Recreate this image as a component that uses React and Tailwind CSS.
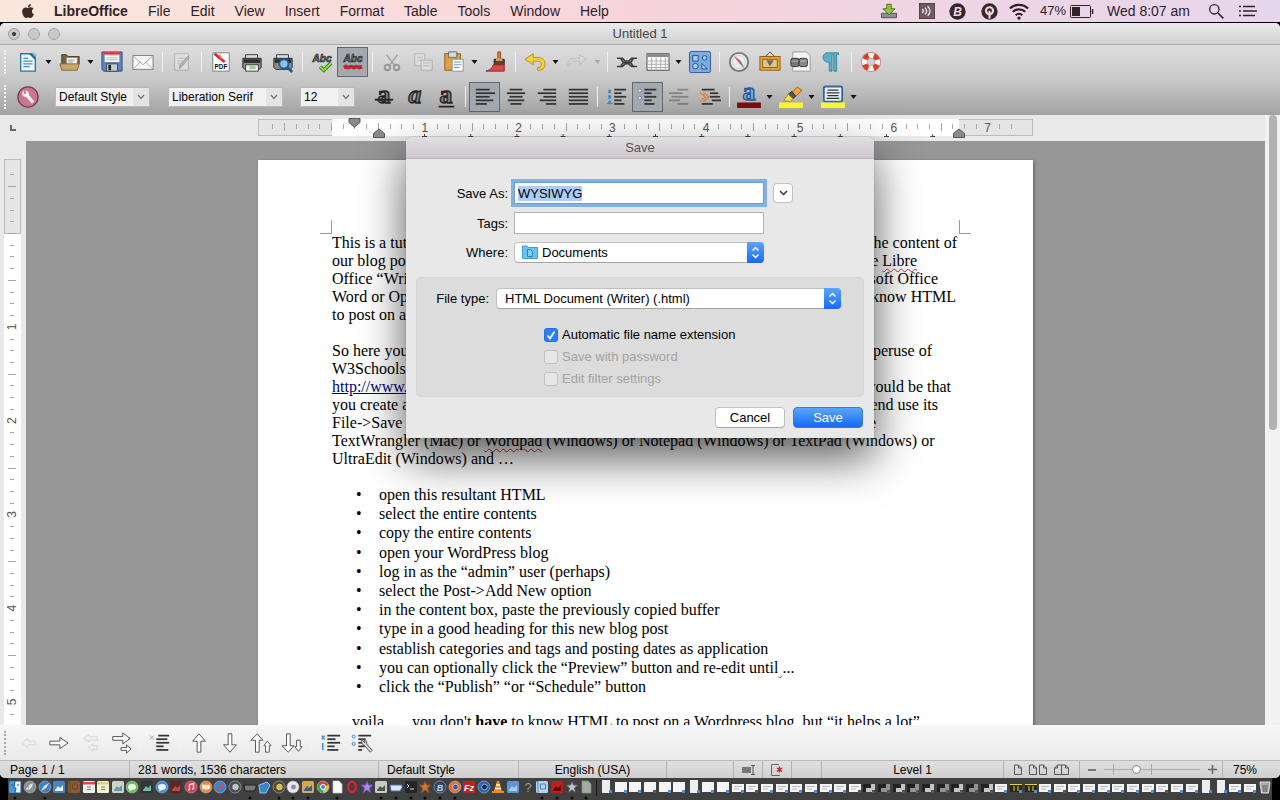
import { useEffect, useRef, useState } from "react";
import { FaApple } from "react-icons/fa";

const INCH = 93.8;
const MENUS = ["File", "Edit", "View", "Insert", "Format", "Table", "Tools", "Window", "Help"];

// each line is split where the save sheet covers it; end is the line's measured width
const LINES = [
  { left: "This is a tutorial", right: "the content of", end: 625 },
  { left: "our blog post", right: <>the <Misspelt>Libre</Misspelt></>, end: 585 },
  { left: "Office “Writer”", right: "Microsoft Office", end: 606 },
  { left: "Word or Open", right: "know HTML", end: 624 },
  { left: "to post on a" },
  {},
  { left: "So here you", right: "peruse of", end: 600 },
  { left: "W3Schools" },
  { link: "http://www.w3", right: "would be that", end: 619 },
  { left: "you create a", right: "end use its", end: 606 },
  { left: "File->Save As", right: "the", end: 544 },
];

const STEPS = [
  "open this resultant HTML",
  "select the entire contents",
  "copy the entire contents",
  "open your WordPress blog",
  "log in as the “admin” user (perhaps)",
  "select the Post->Add New option",
  "in the content box, paste the previously copied buffer",
  "type in a good heading for this new blog post",
  "establish categories and tags and posting dates as application",
  "preview",
  "click the “Publish” “or “Schedule” button",
];

function Misspelt({ children }) {
  return (
    <span className="underline decoration-[#c0304a] decoration-wavy decoration-1 underline-offset-2">
      {children}
    </span>
  );
}

function Icon({ children, size = 22, className = "" }) {
  return (
    <svg width={size} height={size} viewBox="0 0 24 24" fill="none" className={`shrink-0 overflow-visible ${className}`} aria-hidden="true">
      {children}
    </svg>
  );
}

function Tool({ label, active, faded, children }) {
  return (
    <button
      type="button"
      aria-label={label}
      className={`flex h-[30px] w-[31px] shrink-0 items-center justify-center ${
        active ? "border border-[#60676f] bg-[#a4a9b0]" : ""
      } ${faded ? "opacity-40" : ""}`}
    >
      <Icon>{children}</Icon>
    </button>
  );
}

function Caret({ faded }) {
  return (
    <span className={`flex w-[11px] shrink-0 justify-center ${faded ? "opacity-20" : ""}`}>
      <svg width="7" height="4" viewBox="0 0 7 4" aria-hidden="true">
        <path d="M0.500 0h6L3.500 4z" fill="#111" />
      </svg>
    </span>
  );
}

function Sep() {
  return (
    <span className="flex w-2 shrink-0 justify-center">
      <span className="h-5 w-px bg-[#f0f0f0]" />
    </span>
  );
}

function Grip({ dark }) {
  return <span className={`mr-[5px] ml-1 h-6 w-[3px] shrink-0 border-l-2 border-dotted ${dark ? "border-[#aaa]" : "border-[#f4f4f4]"}`} />;
}

function Combo({ label, value, className }) {
  return (
    <span className={`relative h-5 shrink-0 ${className}`}>
      <select
        aria-label={label}
        className="block h-full w-full appearance-none border border-[#b9b9b9] bg-[#f1f1f1] pl-[3px] text-[12px] leading-[18px] text-black outline-none"
      >
        <option>{value}</option>
      </select>
      <span className="pointer-events-none absolute inset-y-px right-px flex w-4 items-center justify-center bg-[#e4e4e4]">
        <svg width="8" height="6" viewBox="0 0 8 6" fill="none" aria-hidden="true">
          <path d="M1 1l3 3.500L7 1" stroke="#777" strokeWidth="1.300" />
        </svg>
      </span>
    </span>
  );
}

function Bars({ x = [2, 2, 2, 2, 2], w = [15, 21, 15, 19, 12], color = "#333" }) {
  return x.map((start, i) => (
    <rect key={i} x={start} y={3 + i * 3.900} width={w[i]} height="1.900" fill={color} />
  ));
}

function Printer() {
  return (
    <>
      <path d="M5 9V4h13v5" fill="#dcdcdc" stroke="#333" />
      <path d="M2 8h20v10l-2 2H4l-2-2z" fill="#8c8c8c" stroke="#222" />
      <rect x="3" y="9" width="18" height="4" fill="#2d2d2d" />
    </>
  );
}

function StandardBar() {
  return (
    <div className="flex h-[35px] items-center pb-px">
      <Grip />
      <Tool label="New">
        <path d="M4 3h13l3 3v16H4z" fill="#eef7fc" stroke="#277aa6" strokeWidth="1.500" />
        <path d="M7 8h5M7 11h10M7 14h10M7 17h7" stroke="#3a94c0" strokeWidth="1.500" />
        <path d="M13 3h7v7z" fill="#1d6c98" />
        <path d="M17 2l4 4" stroke="#7cc2e2" strokeWidth="2" />
      </Tool>
      <Caret />
      <Tool label="Open">
        <path d="M3 14V4h5l2 2h12v8z" fill="#77603c" stroke="#4c3c22" />
        <rect x="8" y="7" width="12" height="10" fill="#f2f2f2" stroke="#888" />
        <path d="M10 10h7M10 12h5" stroke="#999" />
        <path d="M1 14h21l-2 7H3z" fill="#c6a66a" stroke="#80663a" />
      </Tool>
      <Caret />
      <Tool label="Save">
        <path d="M1 1h22v21H3l-2-2z" fill="#5a86bd" stroke="#234d86" />
        <rect x="4" y="1" width="16" height="11" fill="#fafafa" />
        <rect x="3" y="1" width="18" height="3" fill="#e33a3a" />
        <path d="M6 7.500h12M6 9.500h12" stroke="#b5b5b5" />
        <rect x="6" y="14" width="12" height="8" fill="#c5ccd4" stroke="#33495f" />
        <rect x="8" y="15" width="3" height="6" fill="#222" />
      </Tool>
      <Tool label="Email">
        <rect x="1" y="5" width="22" height="15" fill="#f8f8f8" stroke="#777" />
        <path d="M1.500 5.500L12 15l10.500-9.500M2 19l7-7M22 19l-7-7" stroke="#a5a5a5" />
      </Tool>
      <Sep />
      <Tool label="Edit mode" faded>
        <path d="M4 3h15v18H4z" fill="#eee" stroke="#777" />
        <path d="M7 8h9M7 11h7M7 14h5" stroke="#888" />
        <path d="M20 7L11 18l-2 1 .5-3L18 6z" fill="#888" stroke="#555" />
      </Tool>
      <Sep />
      <Tool label="Export as PDF">
        <path d="M3 2h18v20H3z" fill="#fff" stroke="#777" />
        <path d="M5 3l11 9" stroke="#d3262d" strokeWidth="3" />
        <path d="M10 4l3 4" stroke="#f08a8a" strokeWidth="2" />
        <text x="12" y="20" textAnchor="middle" fontSize="7" fontWeight="700" fill="#111">PDF</text>
      </Tool>
      <Tool label="Print">
        <Printer />
        <path d="M5 15h14v7H5z" fill="#f6f6f6" stroke="#333" />
        <rect x="9" y="16" width="7" height="4" fill="#9ed08c" />
      </Tool>
      <Tool label="Print preview">
        <Printer />
        <circle cx="13" cy="14" r="5" fill="#8fc2ea" stroke="#1c5c98" strokeWidth="2" />
        <path d="M17 18l5 5" stroke="#1c5c98" strokeWidth="3" />
      </Tool>
      <Sep />
      <Tool label="Spelling">
        <text x="12" y="12" textAnchor="middle" fontSize="11" fontWeight="700" fontStyle="italic" fill="#777" stroke="#222" strokeWidth="0.700">Abc</text>
        <path d="M10 17l4 4 8-8" stroke="#387c14" strokeWidth="4" />
        <path d="M10 17l4 4 8-8" stroke="#90dc4a" strokeWidth="2" />
      </Tool>
      <Tool label="Automatic spell checking" active>
        <text x="12" y="12" textAnchor="middle" fontSize="11" fontWeight="700" fontStyle="italic" fill="#777" stroke="#222" strokeWidth="0.700">Abc</text>
        <path d="M2 18l2-1 3 1 3-1 3 1 3-1 3 1 3-1" stroke="#c42036" strokeWidth="4" />
      </Tool>
      <Sep />
      <Tool label="Cut" faded>
        <path d="M6 4l9 12M18 4L9 16" stroke="#555" strokeWidth="1.500" />
        <circle cx="7" cy="18" r="3" stroke="#444" strokeWidth="2" />
        <circle cx="17" cy="18" r="3" stroke="#444" strokeWidth="2" />
      </Tool>
      <Tool label="Copy" faded>
        <path d="M3 3h11v13H3z" fill="#eee" stroke="#777" />
        <path d="M5 7h7M5 10h7" stroke="#888" />
        <path d="M10 10h12v11H10z" fill="#eee" stroke="#777" />
        <path d="M12 13h8M12 16h8" stroke="#888" />
      </Tool>
      <Tool label="Paste">
        <rect x="2" y="3" width="17" height="18" fill="#dfa04c" stroke="#8c5c1e" />
        <path d="M6 1h9v6H6z" fill="#d8d8d8" stroke="#666" />
        <path d="M10 9h12v13H10z" fill="#fff" stroke="#8a8a8a" />
        <path d="M12 12h8M12 15h8M12 18h6" stroke="#6a8db0" />
      </Tool>
      <Caret />
      <Tool label="Clone formatting">
        <path d="M14 1h3v9h-3z" fill="#d88332" stroke="#844812" />
        <path d="M10 9h11v6H10z" fill="#55423a" stroke="#2c211d" />
        <path d="M12 8h7v3h-7z" fill="#e0994c" />
        <path d="M9 15h12v7L1 22c4-1 7-3 8-7z" fill="#d44a4a" stroke="#92262a" />
      </Tool>
      <Sep />
      <Tool label="Undo">
        <path d="M1 9l9-6v4h5c5 0 8 3 8 7 0 5-3 7-8 7v-3c3 0 4-2 4-4s-2-3-4-3h-5v4z" fill="#f4cf45" stroke="#b48b17" />
      </Tool>
      <Caret />
      <Tool label="Redo" faded>
        <path d="M22 9l-7-5v4H9c-5 0-7 3-7 8h2c0-4 2-5 5-5h6v4z" fill="#ddd" stroke="#999" />
      </Tool>
      <Caret faded />
      <Sep />
      <Tool label="Hyperlink">
        <path d="M1 8h6l3 3h4l3-3h6M1 17h6l3-3h4l3 3h6M5 8l3 4.500L5 17M19 8l-3 4.500 3 4.500" stroke="#3d3d3d" strokeWidth="1.700" />
        <path d="M8 12.500h8" stroke="#3d3d3d" strokeWidth="2" />
      </Tool>
      <Tool label="Table">
        <rect x="0" y="3" width="24" height="18" fill="#fafafa" stroke="#444" />
        <rect x="0.500" y="3.500" width="23" height="3" fill="#8a8a8a" />
        <path d="M0 11h24M0 14.500h24M0 18h24M5 7v14M10 7v14M15 7v14M20 7v14" stroke="#aaa" />
      </Tool>
      <Caret />
      <Tool label="Draw functions">
        <rect x="0.500" y="0.500" width="23" height="23" rx="2" fill="#7fabe0" stroke="#28558f" />
        <path d="M4 5h6v6H4zM14 13.500v6h6z" stroke="#174a86" fill="#acd0f5" />
        <circle cx="17" cy="7.500" r="2.500" stroke="#174a86" fill="#acd0f5" />
        <circle cx="7" cy="16.500" r="3" stroke="#174a86" fill="#acd0f5" />
      </Tool>
      <Sep />
      <Tool label="Navigator">
        <circle cx="12" cy="12" r="10" fill="#eee" stroke="#777" strokeWidth="2" />
        <circle cx="12" cy="12" r="7" stroke="#ccc" />
        <path d="M6 5l8 6-2 2z" fill="#d04862" />
        <path d="M18 19l-6-6 2-2z" fill="#777" />
      </Tool>
      <Tool label="Gallery">
        <path d="M7 6l5-5 5 5" stroke="#5c451c" />
        <rect x="1" y="6" width="22" height="15" fill="#e8a63c" stroke="#8e5a10" />
        <rect x="4" y="9" width="16" height="9" fill="#d8c88e" stroke="#8e5a10" />
        <path d="M8 10h8l-4 7z" fill="#6e6a4c" />
      </Tool>
      <Tool label="Data sources">
        <path d="M3 1h15l4 4v17H3z" fill="#f4f4f4" stroke="#999" />
        <rect x="1" y="8" width="9" height="9" rx="2" fill="#777" stroke="#333" />
        <rect x="10" y="8" width="9" height="9" rx="2" fill="#888" stroke="#333" />
        <path d="M2 11h7M11 11h7" stroke="#bbb" />
      </Tool>
      <Tool label="Nonprinting characters">
        <path d="M6 2h13v2h-2v18h-3V4h-2v18H9v-10a5 5 0 0 1-3-10z" fill="#5fb0c6" stroke="#33839c" />
      </Tool>
      <Sep />
      <Tool label="Help">
        <circle cx="12" cy="12" r="7.500" stroke="#f6f3ee" strokeWidth="6" />
        <circle cx="12" cy="12" r="7.500" stroke="#d8402c" strokeWidth="6" strokeDasharray="5.900 5.880" strokeDashoffset="-3" />
        <circle cx="12" cy="12" r="4" fill="#ccd0e4" stroke="#a88" strokeWidth="0.500" />
        <circle cx="12" cy="12" r="10.500" stroke="#b06452" strokeWidth="0.700" />
      </Tool>
    </div>
  );
}

function Glyph({ slant, fill = "#808080", stroke = "#262626", y = 19, children }) {
  return (
    <>
      <text
        x="12"
        y={y}
        textAnchor="middle"
        fontSize="28"
        fontWeight="700"
        fontFamily="Liberation Serif, serif"
        fontStyle={slant ? "italic" : "normal"}
        fill={fill}
        stroke={stroke}
        strokeWidth="1.500"
      >
        a
      </text>
      {children}
    </>
  );
}

function FormattingBar() {
  return (
    <div className="flex h-[35px] items-center pb-px">
      <Grip />
      <Tool label="Styles">
        <circle cx="12" cy="12" r="11" fill="#c9798f" stroke="#7d3850" strokeWidth="1.500" />
        <path d="M7 5a4 4 0 0 0 3 7l6 7 3-2-6-7a4 4 0 0 0-4-5l1 3-2 1z" fill="#f6f0f2" />
      </Tool>
      <Combo label="Paragraph style" value="Default Style" className="ml-3 w-[95px]" />
      <Combo label="Font name" value="Liberation Serif" className="ml-[18px] w-[115px]" />
      <Combo label="Font size" value="12" className="mr-[13px] ml-[17px] w-[55px]" />
      <Tool label="Bold"><Glyph><path d="M2 15h20" stroke="#262626" strokeWidth="2" /></Glyph></Tool>
      <Tool label="Italic"><Glyph slant /></Tool>
      <Tool label="Underline"><Glyph><path d="M4 22.500h17" stroke="#262626" strokeWidth="1.700" /></Glyph></Tool>
      <Sep />
      <Tool label="Align left" active><Bars /></Tool>
      <Tool label="Center"><Bars x={[5, 2, 5, 3, 6]} w={[14, 20, 14, 18, 12]} /></Tool>
      <Tool label="Align right"><Bars x={[8, 2, 8, 4, 11]} w={[14, 20, 14, 18, 11]} /></Tool>
      <Tool label="Justify"><Bars w={[21, 21, 21, 21, 21]} /></Tool>
      <Sep />
      <Tool label="Numbering">
        <path d="M4 4v16" stroke="#3f86ca" strokeWidth="3" strokeDasharray="4 2" />
        <path d="M1 19h6" stroke="#3f86ca" />
        <Bars x={[9, 9, 9, 9, 9]} w={[13, 8, 13, 8, 11]} />
      </Tool>
      <Tool label="Bullets" active>
        <circle cx="3" cy="5" r="1.800" fill="#fff" stroke="#4b7db5" />
        <circle cx="3" cy="13" r="1.800" fill="#fff" stroke="#4b7db5" />
        <Bars x={[8, 8, 8, 8, 8]} w={[13, 8, 13, 8, 11]} />
      </Tool>
      <Tool label="Decrease indent" faded><Bars x={[10, 1, 4, 1, 10]} w={[12, 15, 18, 12, 12]} /></Tool>
      <Tool label="Increase indent">
        <Bars x={[3, 12, 12, 14, 3]} w={[14, 9, 11, 10, 12]} />
        <path d="M1 7l6 5-6 5M5 7l6 5-6 5" stroke="#dd7d35" strokeWidth="1.500" />
      </Tool>
      <Sep />
      <Tool label="Font color">
        <Glyph y={15} fill="#79abe0" stroke="#275a99" />
        <rect y="18" width="26" x="-1" height="6" fill="#7b0f10" />
      </Tool>
      <Caret />
      <Tool label="Highlighting">
        <path d="M13 7l6-6 5 4-8 7z" fill="#f0a63a" stroke="#96600e" />
        <path d="M9 9l4-3 4 5-3 3z" fill="#555" stroke="#222" />
        <path d="M4 16l5-7 5 5-3 3z" fill="#f5df52" stroke="#a48a1c" />
        <rect y="18" width="26" x="-1" height="6" fill="#f9f633" />
      </Tool>
      <Caret />
      <Tool label="Background color">
        <rect x="2" y="0.500" width="20" height="16.500" rx="2" fill="#eaf2fb" stroke="#3467a4" strokeWidth="2" />
        <path d="M6 4.500h12M5 7.500h14M6 10.500h12M5 13.500h14" stroke="#333" strokeWidth="1.500" />
        <rect y="18" width="26" x="-1" height="6" fill="#f9f633" />
      </Tool>
      <Caret />
    </div>
  );
}

function BulletsBar() {
  const arrow = { fill: "#fff", stroke: "#4a4a4a", strokeWidth: 1 };
  return (
    <div className="flex h-[35px] shrink-0 items-center bg-linear-to-b from-[#f7f7f7] to-[#e9e9e9]">
      <Grip dark />
      <Tool label="Promote" faded><path d="M20 10h-8V7l-7 5 7 5v-3h8z" fill="#eee" stroke="#bbb" /></Tool>
      <Tool label="Demote"><path d="M2 10h11V6l9 6-9 6v-4H2z" {...arrow} /></Tool>
      <Tool label="Promote with subpoints" faded><path d="M20 5h-9V3L5 7l6 4V9h9zM20 15h-5v-2l-5 4 5 4v-2h5z" fill="#eee" stroke="#aaa" /></Tool>
      <Tool label="Demote with subpoints">
        <path d="M3 5h11V1l8 6-8 6V9H3zM12 17h6v-3l5 4.500-5 4.500v-3h-6z" {...arrow} />
      </Tool>
      <Sep />
      <Tool label="Insert unnumbered entry">
        <path d="M1 4l4 4M5 4L1 8" stroke="#999" />
        <Bars x={[10, 8, 8, 8, 8]} w={[12, 12, 14, 8, 13]} />
      </Tool>
      <Sep />
      <Tool label="Move up"><path d="M10 22V10H5l7-8 7 8h-5v12z" {...arrow} /></Tool>
      <Tool label="Move down"><path d="M10 2v12H5l7 8 7-8h-5V2z" {...arrow} /></Tool>
      <Tool label="Move up with subpoints"><path d="M6 22V9H1l7-7 6 7h-4v13zM17 22v-7h-2l4-5 4 5h-2v7z" {...arrow} /></Tool>
      <Tool label="Move down with subpoints"><path d="M6 2v13H1l7 7 6-7h-4V2zM17 9v7h-2l4 5 4-5h-2V9z" {...arrow} /></Tool>
      <Sep />
      <Tool label="Restart numbering">
        <path d="M2 4l3 4M5 4L2 8M3 12v8" stroke="#3f86ca" strokeWidth="1.500" />
        <Bars x={[8, 8, 8, 8, 8]} w={[14, 9, 14, 8, 12]} />
      </Tool>
      <Tool label="Bullets and numbering">
        <circle cx="3" cy="5" r="1.700" stroke="#3f86ca" />
        <circle cx="3" cy="13" r="1.700" stroke="#3f86ca" />
        <Bars x={[8, 8, 8, 8, 8]} w={[14, 8, 5, 7, 4]} />
        <path d="M12 8a5 5 0 0 0 3 7l6 7 2-2-6-7a4 4 0 0 0-2-5v4z" fill="#ddd" stroke="#444" />
      </Tool>
    </div>
  );
}

function MenuBar() {
  return (
    <header className="flex h-[23px] shrink-0 items-center border-b border-black bg-linear-to-r from-[#fbe7dc] via-[#f7d4dc] to-[#e6d6ec] pr-[23px] pl-5 text-[14px] text-[#2f2227]">
      <FaApple className="h-4 w-4 text-[#3a2a25]" aria-hidden="true" />
      <nav className="ml-[18px] flex items-center gap-[20px]">
        <button type="button" className="font-bold">LibreOffice</button>
        {MENUS.map((menu) => (
          <button key={menu} type="button">{menu}</button>
        ))}
      </nav>
      <div className="ml-auto flex items-center">
        <Icon size={18}>
          <path d="M2 15h20v6H2z" fill="#8a8f98" stroke="#33383f" />
          <path d="M9 3h6v6h5l-8 8-8-8h5z" fill="#8fc83a" stroke="#33520d" />
        </Icon>
        <Icon size={16} className="ml-[21px]">
          <rect x="0.500" y="0.500" width="23" height="23" fill="#6e5b62" stroke="#33262b" />
          <path d="M5 9q3 3 0 6M9 7q5 5 0 10M13 5q7 7 0 14" stroke="#f3dfe6" strokeWidth="2" />
        </Icon>
        <Icon size={17} className="ml-[14px]">
          <circle cx="12" cy="12" r="11.500" fill="#35282d" />
          <text x="12" y="18" textAnchor="middle" fontSize="17" fontWeight="700" fontStyle="italic" fill="#f3d6e0">B</text>
        </Icon>
        <Icon size={17} className="ml-[15px]">
          <circle cx="12" cy="12" r="11.500" fill="#35282d" />
          <circle cx="12" cy="11" r="5" stroke="#f3d6e0" strokeWidth="3" />
          <path d="M12 11v11" stroke="#f3d6e0" strokeWidth="3" />
        </Icon>
        <Icon size={20} className="ml-[11px]">
          <path d="M1 9a16 16 0 0 1 22 0M4.500 13a11 11 0 0 1 15 0M8 17a6 6 0 0 1 8 0" stroke="#2f2227" strokeWidth="2.500" />
          <circle cx="12" cy="20.500" r="2" fill="#2f2227" />
        </Icon>
        <span className="ml-[11px] text-[13px]">47%</span>
        <svg width="24" height="13" viewBox="0 0 24 13" fill="none" className="ml-1" aria-hidden="true">
          <rect x="0.500" y="0.500" width="20" height="12" rx="1" stroke="#2f2227" />
          <rect x="2" y="2" width="8" height="9" fill="#2f2227" />
          <path d="M22.500 4v5" stroke="#2f2227" strokeWidth="1.500" />
        </svg>
        <time className="ml-[13px]">Wed 8:07 am</time>
        <Icon size={16} className="ml-[18px]">
          <circle cx="9.500" cy="9.500" r="7" stroke="#2f2227" strokeWidth="2" />
          <path d="M15 15l8 8" stroke="#2f2227" strokeWidth="2.500" />
        </Icon>
        <svg width="18" height="12" viewBox="0 0 18 12" className="ml-[15px]" fill="none" aria-hidden="true">
          <path d="M0 1.500h2M0 6h2M0 10.500h2M4 1.500h12M4 6h14M4 10.500h12" stroke="#2f2227" strokeWidth="1.700" />
        </svg>
      </div>
    </header>
  );
}

function HorizontalRuler() {
  const ticks = [];
  for (let i = -5; i <= 58; i += 1) {
    if (i > 0 && i % 8 === 0) continue;
    ticks.push({ x: 73 + (i * INCH) / 8, half: i % 4 === 0 });
  }
  return (
    <svg width="775" height="26" viewBox="0 0 775 26" className="mx-auto" aria-hidden="true">
      <rect x="0.500" y="4.500" width="774" height="16" fill="#e5e5e5" stroke="#bcbcbc" />
      <rect x="74" y="4" width="627" height="17" fill="#fff" />
      {ticks.map(({ x, half }) => (
        <rect key={x} x={Math.round(x)} y={half ? 8 : 9} width="1" height={half ? 8 : 5} fill="#a8a8a8" />
      ))}
      {[1, 2, 3, 4, 5, 6, 7].map((n) => (
        <text key={n} x={73 + n * INCH} y="16.500" textAnchor="middle" fontSize="12" fill="#555">{n}</text>
      ))}
      {Array.from({ length: 12 }, (_, i) => (
        <path key={i} d={`M${164 + i * 46.200} 21.500h5m-2.500 0v-2.500`} stroke="#444" fill="none" />
      ))}
      <path d="M91 3.500h11v4l-5.500 4.500L91 7.500z" fill="#8b8b8b" stroke="#555" />
      <path d="M115.500 22.500h11v-4L121 14l-5.500 4.500z" fill="#8b8b8b" stroke="#555" />
      <path d="M695.500 22.500h11v-4L701 14l-5.500 4.500z" fill="#8b8b8b" stroke="#555" />
    </svg>
  );
}

function VerticalRuler() {
  const ticks = [];
  for (let i = -5; i <= 60; i += 1) {
    if (i > 0 && i % 8 === 0) continue;
    ticks.push({ y: 92 + (i * INCH) / 8, half: i % 4 === 0 });
  }
  return (
    <svg width="26" className="h-full shrink-0 bg-[#e9e9e9]" aria-hidden="true">
      <rect x="4" y="19" width="17" height="2000" fill="#fff" />
      <rect x="4.500" y="18.500" width="16" height="74" fill="#e5e5e5" stroke="#bcbcbc" />
      {ticks.map(({ y, half }) => (
        <rect key={y} x={half ? 8 : 10} y={Math.round(y)} width={half ? 8 : 4} height="1" fill="#a5a5a5" />
      ))}
      {[1, 2, 3, 4, 5].map((n) => (
        <text key={n} transform={`translate(16 ${92 + n * INCH}) rotate(-90)`} textAnchor="middle" fontSize="12" fill="#555">{n}</text>
      ))}
    </svg>
  );
}

function Page() {
  return (
    <article className="relative mx-auto mt-[19px] h-[1000px] w-[775px] bg-white pt-[74px] pr-[60px] pl-[74px] font-['Liberation_Serif',serif] text-[16px] leading-[18px] text-black shadow-[1px_1px_3px_rgba(0,0,0,0.4)]">
      <span className="absolute top-[60px] left-[62px] h-[14px] w-3 border-r border-b border-[#999]" />
      <span className="absolute top-[60px] left-[701px] h-[14px] w-3 border-b border-l border-[#999]" />
      {LINES.map(({ left, link, right, end }, i) => (
        <p key={i} className="flex h-[18px] justify-between whitespace-nowrap" style={{ width: end }}>
          {link ? <a href="#w3" className="text-[#00007a] underline">{link}</a> : <span>{left}</span>}
          <span>{right}</span>
        </p>
      ))}
      <p className="whitespace-nowrap">
        TextWrangler (Mac) or <Misspelt>Wordpad</Misspelt> (Windows) or Notepad (Windows) or TextPad (Windows) or
      </p>
      <p>UltraEdit (Windows) and …</p>
      <ul className="mt-[17px] flex h-[211px] flex-col justify-between leading-[19px]">
        {STEPS.map((step) => (
          <li key={step} className="flex">
            <span className="w-[47px] pl-6">•</span>
            {step === "preview" ? (
              <span>
                you can optionally click the “Preview” button and re-edit until
                <span className="underline decoration-[#3c3cc8] decoration-wavy decoration-1"> </span>...
              </span>
            ) : (
              <span>{step}</span>
            )}
          </li>
        ))}
      </ul>
      <p className="mt-[17px] pl-5 whitespace-pre">
        voila  ...  you don't <b>have</b> to know HTML to post on a Wordpress blog, but “it helps a lot”
      </p>
    </article>
  );
}

function PopupSelect({ id, value, icon, className }) {
  return (
    <span className={`relative h-[21px] ${className}`}>
      {icon}
      <select
        id={id}
        className={`block h-full w-full appearance-none rounded-[4px] border border-[#c0c0c0] border-b-[#a5a5a5] bg-white text-[13px] outline-none ${icon ? "pl-[27px]" : "pl-2"}`}
      >
        <option>{value}</option>
      </select>
      <span className="pointer-events-none absolute inset-y-0 right-0 flex w-[17px] items-center justify-center rounded-r-[4px] bg-linear-to-b from-[#5ba5f9] to-[#1568f5]">
        <svg width="9" height="13" viewBox="0 0 9 13" fill="none" aria-hidden="true">
          <path d="M1.500 4.500l3-3 3 3M1.500 8.500l3 3 3-3" stroke="#fff" strokeWidth="1.500" />
        </svg>
      </span>
    </span>
  );
}

function CheckRow({ id, label, checked, onChange, disabled }) {
  return (
    <div className="flex h-[14px] items-center">
      <span className="relative h-[14px] w-[14px]">
        <input
          id={id}
          type="checkbox"
          checked={checked}
          onChange={onChange}
          disabled={disabled}
          className="block h-[14px] w-[14px] appearance-none rounded-[3px] border border-[#b5b5b5] bg-[#f2f2f2] checked:border-[#1e6cf0] checked:bg-[#2e7ef7] disabled:border-[#c2c2c2] disabled:bg-[#e6e6e6]"
        />
        {checked && (
          <svg width="14" height="14" viewBox="0 0 14 14" fill="none" className="pointer-events-none absolute inset-0" aria-hidden="true">
            <path d="M3.500 7.500L6 10.500l4.500-7" stroke="#fff" strokeWidth="1.700" />
          </svg>
        )}
      </span>
      <label htmlFor={id} className={`ml-1 ${disabled ? "text-[#a3a3a3]" : ""}`}>{label}</label>
    </div>
  );
}

function SaveDialog() {
  const nameRef = useRef(null);
  const [name, setName] = useState("WYSIWYG");
  const [tags, setTags] = useState("");
  const [autoExtension, setAutoExtension] = useState(true);

  useEffect(() => {
    nameRef.current.focus();
    nameRef.current.select();
  }, []);

  return (
    <div
      role="dialog"
      aria-label="Save"
      className="absolute inset-x-0 top-[137px] mx-auto w-[468px] rounded-t-[5px] bg-[#e8e8e8] pb-[10px] text-[13px] leading-[16px] text-black shadow-[0_0_1px_rgba(0,0,0,0.6),0_20px_46px_rgba(0,0,0,0.65)]"
    >
      <h2 className="flex h-[22px] items-center justify-center rounded-t-[5px] border-b border-[#b9b5b9] bg-linear-to-b from-[#e2dfe2] to-[#cdc9cd] text-[#555]">
        Save
      </h2>
      <div className="mt-[23px] grid grid-cols-[102px_250px_auto] items-center gap-x-[6px] gap-y-2">
        <label htmlFor="save-name" className="pt-[2px] text-right">Save As:</label>
        <input
          id="save-name"
          ref={nameRef}
          value={name}
          onChange={(event) => setName(event.target.value)}
          className="h-[22px] border border-[#6d9fd6] bg-white px-[3px] ring-[3px] ring-[#84b1e2] outline-none selection:bg-[#abcdf7] selection:text-black"
        />
        <button type="button" aria-label="Expand" className="ml-[3px] flex h-5 w-5 items-center justify-center rounded-[4px] border border-[#c0c0c0] bg-white">
          <svg width="9" height="6" viewBox="0 0 9 6" fill="none" aria-hidden="true">
            <path d="M1 1l3.500 3.500L8 1" stroke="#333" strokeWidth="1.500" />
          </svg>
        </button>
        <label htmlFor="save-tags" className="pt-[2px] text-right">Tags:</label>
        <input
          id="save-tags"
          value={tags}
          onChange={(event) => setTags(event.target.value)}
          className="h-[22px] border border-[#b5b5b5] bg-white px-[3px] outline-none"
        />
        <span />
        <label htmlFor="save-where" className="text-right">Where:</label>
        <PopupSelect
          id="save-where"
          value="Documents"
          icon={
            <svg width="16" height="14" viewBox="0 0 16 14" fill="none" className="pointer-events-none absolute top-[3px] left-2" aria-hidden="true">
              <path d="M0.500 2V1h5l1 1.500h9V13.500H.5z" fill="#6cc3ee" stroke="#3d9fd2" />
              <path d="M5.500 4.500h3l2 2v5h-5z" fill="#84d0f4" stroke="#2a86b8" />
            </svg>
          }
        />
      </div>
      <div className="mx-[10px] mt-[14px] rounded-[4px] border border-[#d6d6d6] bg-[#dcdcdc] py-[10px]">
        <div className="flex items-center">
          <label htmlFor="save-type" className="w-[72px] text-right">File type:</label>
          <PopupSelect id="save-type" value="HTML Document (Writer) (.html)" className="ml-[7px] w-[345px]" />
        </div>
        <div className="mt-[19px] ml-[127px] flex flex-col gap-2">
          <CheckRow
            id="auto-extension"
            label="Automatic file name extension"
            checked={autoExtension}
            onChange={(event) => setAutoExtension(event.target.checked)}
          />
          <CheckRow id="with-password" label="Save with password" disabled />
          <CheckRow id="edit-filter" label="Edit filter settings" disabled />
        </div>
      </div>
      <div className="mt-[10px] mr-[11px] flex justify-end gap-2">
        <button type="button" className="h-[21px] w-[70px] rounded-[4px] border border-[#c0c0c0] border-b-[#a5a5a5] bg-white">Cancel</button>
        <button type="button" className="h-[21px] w-[70px] rounded-[4px] border border-[#2f7de8] bg-linear-to-b from-[#5aa6fa] to-[#1467f5] text-white">Save</button>
      </div>
    </div>
  );
}

function StatusBar() {
  const [zoom, setZoom] = useState(32);
  const cell = "flex h-full items-center border-r border-[#b4b4b4]";
  return (
    <footer className="flex h-[18px] shrink-0 items-center border-t border-[#b9b9b9] bg-linear-to-b from-[#e0e0e0] to-[#cfcfcf] text-[12px] text-black">
      <span className={`${cell} w-[130px] pl-[10px]`}>Page 1 / 1</span>
      <span className={`${cell} w-[249px] pl-2`}>281 words, 1536 characters</span>
      <span className={`${cell} w-[140px] pl-2`}>Default Style</span>
      <span className={`${cell} w-[148px] justify-center`}>English (USA)</span>
      <span className={`${cell} w-[67px]`} />
      <span className={`${cell} w-[29px] justify-center`}>
        <svg width="13" height="10" viewBox="0 0 13 10" fill="none" aria-hidden="true">
          <rect y="2" width="9" height="6" fill="#777" />
          <path d="M9 .5h4M9 9.500h4M11 .5v9" stroke="#555" />
        </svg>
      </span>
      <span className={`${cell} w-[29px] justify-center`}>
        <svg width="12" height="12" viewBox="0 0 12 12" fill="none" aria-hidden="true">
          <path d="M8 .5H.5v11H9" stroke="#666" />
          <path d="M8.500 2.500v6M6 4l5 3.500M11 4L6 7.500" stroke="#cf1626" strokeWidth="1.300" />
        </svg>
      </span>
      <span className={`${cell} w-[30px]`} />
      <span className={`${cell} flex-1 justify-center`}>Level 1</span>
      <span className={`${cell} w-[76px] justify-center`}>
        <svg width="56" height="11" viewBox="0 0 56 11" fill="none" stroke="#555" aria-hidden="true">
          <path d="M.5 1h4l3 3v6.500h-7zM4.500 1v3h3M15.500 1h4l3 3v6.500h-7zM19.500 1v3h3M25.500 1h4l3 3v6.500h-7zM29.500 1v3h3" />
          <path d="M47.500 10.500h-7V4l3-3h4zM47.500 10.500h7V4l-3-3h-4zM43.500 1v3h-3M51.500 1v3h3" />
        </svg>
      </span>
      <span className={`${cell} w-[143px] gap-2 pl-2 text-[#666]`}>
        <button type="button" aria-label="Zoom out" className="h-[2px] w-2 bg-[#777]" />
        <span className="relative flex h-full items-center">
          <span className="absolute top-[3px] left-[9px] h-[11px] w-px bg-[#aaa]" />
          <span className="absolute top-[3px] left-[47px] h-[11px] w-px bg-[#aaa]" />
          <input
            type="range"
            aria-label="Zoom"
            value={zoom}
            onChange={(event) => setZoom(Number(event.target.value))}
            className="relative h-[9px] w-[96px] appearance-none bg-transparent bg-linear-to-r from-[#aaa] to-[#aaa] bg-[length:100%_1px] bg-center bg-no-repeat [&::-webkit-slider-thumb]:h-[9px] [&::-webkit-slider-thumb]:w-[9px] [&::-webkit-slider-thumb]:appearance-none [&::-webkit-slider-thumb]:rounded-full [&::-webkit-slider-thumb]:border [&::-webkit-slider-thumb]:border-[#888] [&::-webkit-slider-thumb]:bg-white"
          />
        </span>
        <button type="button" aria-label="Zoom in">
          <svg width="9" height="9" viewBox="0 0 9 9" aria-hidden="true">
            <path d="M0 4.500h9M4.500 0v9" stroke="#666" strokeWidth="1.500" />
          </svg>
        </button>
      </span>
      <span className="w-[57px] pl-[10px]">75%</span>
    </footer>
  );
}

// shape, base colour, accent colour, running
const APPS = [
  ["face", "#3d9be9", "#e8f3fc", true], ["rocket", "#8a9096", "#dfe3e6"], ["compass", "#3f80cc", "#dfe9f5", true],
  ["tile", "#4a84c4", "#e6eff8"], ["book", "#8a5c32", "#6d4522"], ["date", "#f3f3f3", "#e04a3a"],
  ["date", "#f7f2d0", "#e0cf80"], ["tile", "#c8d6c0", "#6a94c8"], ["bubble", "#5cc850", "#eefaea"],
  ["tile", "#2b3a38", "#7ab8a0"], ["bubble", "#3a90e8", "#eef5fc"], ["tile", "#5a2826", "#c04a3c"],
  ["note", "#e0384a", "#fde6e8"], ["openbook", "#ee8a34", "#fdeede"], ["compass", "#3b82d6", "#e24a40"],
  ["lens", "#4a4f55", "#b8bec4"], ["bar", "#777777", "#222222", true], ["hammer", "#3a86c8", "#89c4ee"],
  ["lens", "#5a4a22", "#d8b83c", true], ["lens", "#e9e9ec", "#8890a4", true], ["tile", "#d6a654", "#365a94", true],
  ["chrome", "#e9c13a", "#4285f4"], ["doc", "#f8f8f8", "#d0d0d0", true], ["ring", "#d4222c", "#d4222c"],
  ["star", "#a88be0", "#6a4ab4"], ["tile", "#c9cac4", "#50554c", true], ["bar", "#dfe6ee", "#4c6e9c", true],
  ["term", "#262626", "#dddddd", true], ["star", "#c47a30", "#8a4c18", true], ["bee", "#28466e", "#c8dcf2", true],
  ["lens", "#e8702c", "#3a5cae", true], ["fz", "#c02020", "#ffffff"], ["lens", "#2a62c8", "#16284a"],
  ["cone", "#f08a24", "#f5f5f5"], ["tile", "#5b96d0", "#a8ccec"], ["help", "#9a9a9a", "#9a9a9a"],
  ["book", "#b4d4ec", "#4a84b8", true], ["tile", "#c81c1c", "#5a0808", true], ["star", "#c0c0c8", "#50505a", true],
  ["doc", "#a8a8a8", "#5cae50", true],
];

const SQUARE = ["tile", "face", "book", "date", "term"];
const ROUND = ["rocket", "compass", "bubble", "note", "openbook", "lens", "chrome", "bee"];

function AppIcon({ shape, base, accent, running }) {
  return (
    <svg width="14" height="20" viewBox="0 0 14 20" fill="none" aria-hidden="true">
      {SQUARE.includes(shape) && <rect x="1" y="1" width="12" height="12" rx="1.500" fill={base} />}
      {ROUND.includes(shape) && <circle cx="7" cy="7" r="6" fill={base} stroke="#c0c4c8" strokeWidth="0.500" />}
      {shape === "tile" && <path d="M3 10l3-4 2 2 3-3v6H3z" fill={accent} />}
      {shape === "face" && <path d="M7 1h6v12H7l1-5H6zM4 4v2M10 4v2" fill={accent} stroke="#245a94" />}
      {shape === "book" && <path d="M3 1v12M5.500 4h5v5h-5z" stroke={accent} />}
      {shape === "date" && (
        <>
          <path d="M1 2h12v2.500H1z" fill={accent} />
          <path d="M5 7h4M5 9.500h4" stroke="#777" />
        </>
      )}
      {shape === "term" && <path d="M3 4l2 2-2 2M6 9h4" stroke={accent} />}
      {shape === "rocket" && <path d="M5 9l1-4 4-2-1 4-3 3zM4 7l-1 3 3-1" fill={accent} />}
      {shape === "compass" && <path d="M3 11l3-5 5-3-3 5z" fill={accent} />}
      {shape === "bubble" && <path d="M3 7a4 3 0 1 1 4 3l-3 1.500.5-2A3 3 0 0 1 3 7z" fill={accent} />}
      {shape === "note" && <path d="M5.500 10V4.500l4-1V9M4 10h1.500M8 9h1.500" stroke={accent} strokeWidth="1.500" />}
      {shape === "openbook" && <path d="M7 5L3 4v5l4 1 4-1V4z" fill={accent} stroke={base} strokeWidth="0.500" />}
      {shape === "lens" && <circle cx="7.500" cy="7" r="2.800" fill={accent} stroke="#fff" strokeWidth="0.500" />}
      {shape === "bee" && <text x="7" y="10.500" textAnchor="middle" fontSize="9" fontWeight="700" fontStyle="italic" fill={accent}>B</text>}
      {shape === "chrome" && (
        <>
          <path d="M7 7L2 4a6 6 0 0 1 10.500 1z" fill="#db4437" />
          <path d="M7 7L2 4a6 6 0 0 0 5 9z" fill="#3fa455" />
          <circle cx="7" cy="7" r="2.500" fill={accent} stroke="#fff" />
        </>
      )}
      {shape === "ring" && <ellipse cx="7" cy="7" rx="3.800" ry="5" stroke={base} strokeWidth="2.500" />}
      {shape === "bar" && <path d="M1 5h12v3l-2 3H2z" fill={base} stroke={accent} />}
      {shape === "hammer" && <path d="M2 5l8-3 3 3-4 8H3z" fill={base} stroke={accent} />}
      {shape === "doc" && <path d="M3 1h6l3 3v9H3z" fill={base} stroke={accent} strokeWidth="0.700" />}
      {shape === "star" && <path d="M7 1l1.600 4H13L9.500 8l1.500 5-4-3-4 3 1.500-5L1 5h4.400z" fill={base} stroke={accent} />}
      {shape === "cone" && (
        <>
          <path d="M6 1h2l3 10H3z" fill={base} />
          <path d="M5 5h4M4 8.500h6" stroke={accent} strokeWidth="1.500" />
          <path d="M1 11h12v2H1z" fill={base} />
        </>
      )}
      {shape === "fz" && (
        <>
          <rect x="1" y="1" width="12" height="12" fill={base} />
          <text x="7" y="10.500" textAnchor="middle" fontSize="9" fontWeight="700" fontStyle="italic" fill={accent}>Fz</text>
        </>
      )}
      {shape === "help" && <text x="7" y="12" textAnchor="middle" fontSize="13" fill={base}>?</text>}
      {running && <circle cx="7" cy="18" r="1.500" fill="#0c0c0c" />}
    </svg>
  );
}

function WindowThumb({ index }) {
  const tall = [0, 6, 41, 42].includes(index);
  const dark = index >= 18 && index <= 26;
  const yellow = index === 28 || index === 29;
  let fill = "#f4f5f7";
  if (dark) fill = index % 2 ? "#8f9296" : "#c3c5c8";
  if (yellow) fill = "#28260c";
  return (
    <svg width="14" height="20" viewBox="0 0 14 20" fill="none" aria-hidden="true">
      {tall ? (
        <rect x="3" y="0" width="8" height="13" fill="#eceef0" />
      ) : (
        <rect x="1" y={index < 9 ? 2 : 4} width="12" height={index < 9 ? 10 : 8} fill={fill} />
      )}
      {yellow && <path d="M1 4.500h12M5 6v5M9 6v5" stroke="#e4d838" />}
      {dark && <path d="M1 4h8v4H4v4H1z" fill="#222" />}
      {!tall && !dark && !yellow && index > 8 && <path d="M3 6.500h8M3 9h5" stroke="#b4b8be" />}
      <rect x="10" y="10" width="3" height="3" fill={dark || index % 7 === 3 ? "#555" : "#4c8fd6"} />
    </svg>
  );
}

function Dock() {
  return (
    <div className="flex h-[22px] shrink-0 items-start bg-black px-2">
      <div className="flex h-full flex-1 bg-[#404040] pt-[2px]">
        {APPS.map(([shape, base, accent, running], i) => (
          <span key={i} className="flex flex-1 justify-center">
            <AppIcon shape={shape} base={base} accent={accent} running={running} />
          </span>
        ))}
        <span className="mx-[2px] h-4 w-px bg-[#1c1c1c]" />
        {Array.from({ length: 45 }, (_, i) => (
          <span key={i} className="flex flex-1 justify-center">
            <WindowThumb index={i} />
          </span>
        ))}
        <span className="flex flex-1 justify-center">
          <svg width="14" height="20" viewBox="0 0 14 20" fill="none" aria-hidden="true">
            <path d="M2 2h10l-1.500 11h-7z" fill="#a8a8a8" stroke="#e2e2e2" />
            <path d="M5 5l.5 7M7 5v7M9 5l-.5 7" stroke="#6e6e6e" />
          </svg>
        </span>
      </div>
    </div>
  );
}

function App() {
  return (
    <div className="relative flex h-screen flex-col overflow-hidden bg-black font-['Liberation_Sans',Arial,sans-serif]">
      <MenuBar />
      <div className="flex min-h-0 flex-1 flex-col overflow-hidden rounded-[5px] bg-[#e9e9e9]">
        <div className="relative flex h-[22px] shrink-0 items-center border-b border-[#acacac] bg-linear-to-b from-[#ebebeb] to-[#d1d1d1] text-[13px] text-[#444]">
          <div className="absolute left-2 flex gap-2">
            <button type="button" aria-label="Close" className="flex h-3 w-3 items-center justify-center rounded-full border border-[#9e9e9e] bg-[#c9c9c9]">
              <span className="h-1 w-1 rounded-full bg-[#333]" />
            </button>
            <button type="button" aria-label="Minimize" className="h-3 w-3 rounded-full border border-[#a9a9a9] bg-[#c9c9c9]" />
            <button type="button" aria-label="Zoom window" className="h-3 w-3 rounded-full border border-[#a9a9a9] bg-[#c9c9c9]" />
          </div>
          <h1 className="flex-1 text-center">Untitled 1</h1>
        </div>
        <div className="shrink-0 bg-linear-to-b from-[#dedede] via-[#c8c8c8] to-[#a2a2a2]">
          <StandardBar />
          <FormattingBar />
        </div>
        <main className="flex min-h-0 flex-1">
          <div className="flex min-w-0 flex-1 flex-col">
            <div className="flex h-[26px] shrink-0">
              <span className="w-[26px] pt-[10px] pl-[10px]">
                <span className="block h-[6px] w-[6px] border-b-2 border-l-2 border-[#666]" />
              </span>
              <span className="flex-1">
                <HorizontalRuler />
              </span>
            </div>
            <div className="flex min-h-0 flex-1">
              <VerticalRuler />
              <div className="min-w-0 flex-1 overflow-hidden bg-[#979797]">
                <Page />
              </div>
            </div>
          </div>
          <div className="w-[15px] bg-[#f2f2f2] px-[3px]">
            <div className="ml-px h-[315px] w-2 rounded-full bg-[#b2b2b2]" />
          </div>
        </main>
        <BulletsBar />
        <StatusBar />
      </div>
      <Dock />
      <SaveDialog />
    </div>
  );
}

export default App;
